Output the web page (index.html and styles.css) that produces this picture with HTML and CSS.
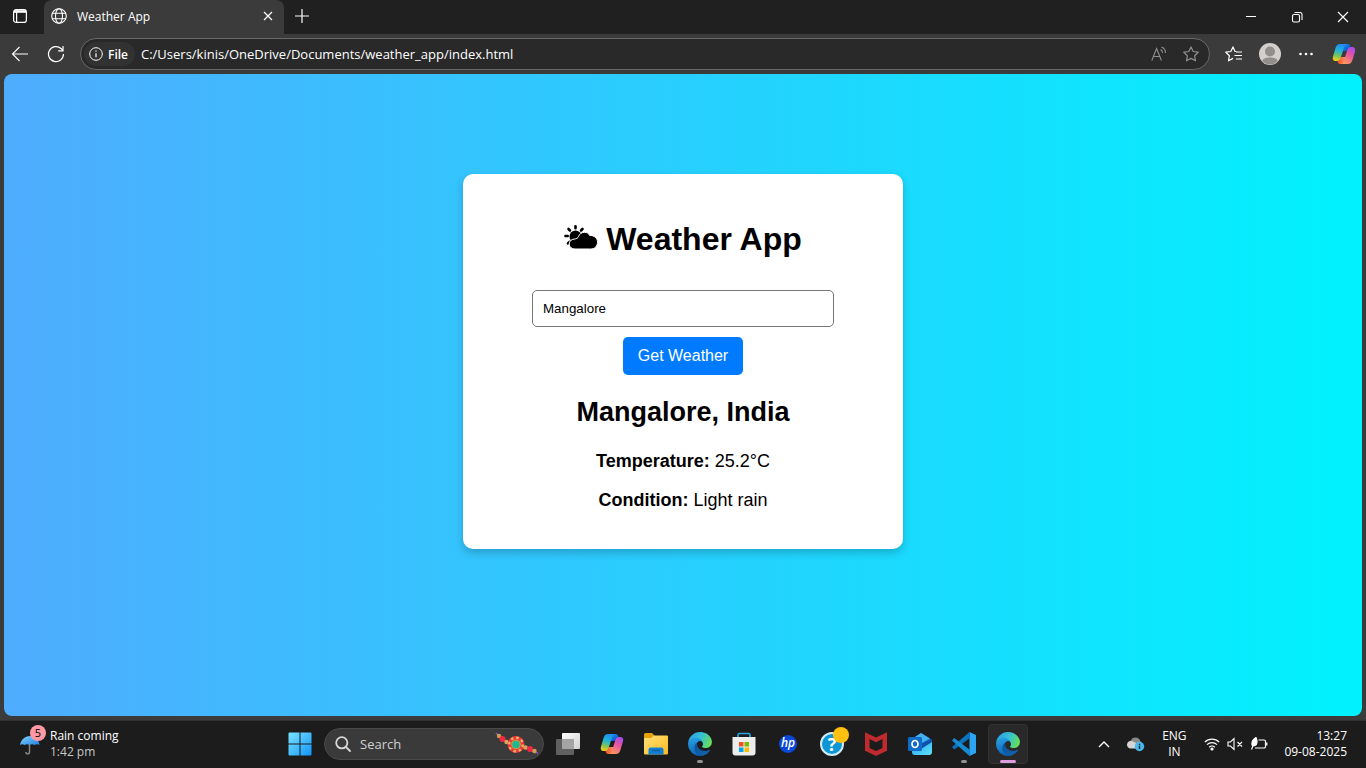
FILE: index.html
```html
<!DOCTYPE html>
<html lang="en">
<head>
<meta charset="utf-8">
<title>Weather App</title>
<link rel="stylesheet" href="styles.css">
</head>
<body>
<svg class="defs" aria-hidden="true">
  <defs>
    <linearGradient id="cpA" x1=".5" y1="0" x2=".3" y2="1"><stop offset="0" stop-color="#1f8cf2"/><stop offset=".4" stop-color="#21b6d6"/><stop offset=".7" stop-color="#7cc35a"/><stop offset="1" stop-color="#f5d312"/></linearGradient>
    <linearGradient id="cpB" x1=".8" y1="0" x2=".3" y2="1"><stop offset="0" stop-color="#a04cf0"/><stop offset=".45" stop-color="#e8559f"/><stop offset="1" stop-color="#ff9a5c"/></linearGradient>
    <linearGradient id="cpC" x1="0" y1="0" x2="1" y2="1"><stop offset="0" stop-color="#1d9bf0"/><stop offset="1" stop-color="#0a3fc4"/></linearGradient>
    <linearGradient id="cpD" x1="0" y1="0" x2="1" y2="0"><stop offset="0" stop-color="#f4452f"/><stop offset="1" stop-color="#ff9a5c"/></linearGradient>
    <linearGradient id="edA" x1="0" y1=".3" x2="1" y2=".6"><stop offset="0" stop-color="#2a9fe0"/><stop offset=".5" stop-color="#35c1d6"/><stop offset="1" stop-color="#68e04f"/></linearGradient>
    <linearGradient id="edB" x1=".3" y1="0" x2=".5" y2="1"><stop offset="0" stop-color="#2aa4e6"/><stop offset="1" stop-color="#0b5fb4"/></linearGradient>
    <linearGradient id="edC" x1="0" y1="0" x2="1" y2="1"><stop offset="0" stop-color="#0d4f94"/><stop offset="1" stop-color="#1166b0"/></linearGradient>
    <linearGradient id="winG" x1="0" y1="0" x2="24" y2="24" gradientUnits="userSpaceOnUse"><stop offset="0" stop-color="#7de6ff"/><stop offset="1" stop-color="#0f93fa"/></linearGradient>
    <linearGradient id="foG" x1="0" y1="0" x2="1" y2="1"><stop offset="0" stop-color="#ffe07a"/><stop offset="1" stop-color="#fcbb1c"/></linearGradient>
    <linearGradient id="umG" x1="0" y1="0" x2="1" y2="1"><stop offset="0" stop-color="#82d4ff"/><stop offset="1" stop-color="#2282e0"/></linearGradient>
    <linearGradient id="whG" x1="0" y1="0" x2="1" y2="1"><stop offset="0" stop-color="#ffffff"/><stop offset="1" stop-color="#cfcfcf"/></linearGradient>
    <linearGradient id="olG" x1="0" y1="0" x2="1" y2="1"><stop offset="0" stop-color="#1e9df0"/><stop offset="1" stop-color="#62e4fb"/></linearGradient>
    <symbol id="copilot" viewBox="0 0 24 24">
      <path d="M10 2h5c2 0 2.900.9 3.300 2.300L19 6.200c-2 0-3 .9-3.700 2.800H11z" fill="url(#cpC)"/>
      <path d="M14 22H9c-2 0-2.900-.9-3.300-2.300L5 17.800c2 0 3-.9 3.700-2.800H13z" fill="url(#cpD)"/>
      <path d="M8 2h7c-1.500 0-2.300 1-2.800 2.700L8.800 15.500C8.200 17.500 7 19 5 19H4C1 19 .3 17 1 14.500l2.700-9C4.500 3 6 2 8 2z" fill="url(#cpA)"/>
      <path d="M16 22H9c1.500 0 2.300-1 2.800-2.700L15.200 8.500C15.800 6.500 17 5 19 5h1c3 0 3.700 2 3 4.500l-2.700 9C19.500 21 18 22 16 22z" fill="url(#cpB)"/>
    </symbol>
    <symbol id="edge" viewBox="4 4 257 257">
      <path d="M235.680 195.460a93.730 93.730 0 0 1-10.540 4.710 101.870 101.870 0 0 1-35.900 6.460c-47.320 0-88.540-32.550-88.540-74.320A31.480 31.480 0 0 1 117.130 105c-42.800 1.800-53.800 46.400-53.800 72.530 0 73.880 68.090 81.370 82.760 81.370 7.910 0 19.840-2.300 27-4.560l1.310-.44a128.340 128.340 0 0 0 66.600-52.800 4 4 0 0 0-5.320-5.640z" fill="url(#edC)"/>
      <path d="M110.340 246.340A79.200 79.200 0 0 1 87.600 225a80.720 80.720 0 0 1 29.530-120c3.120-1.470 8.450-4.130 15.540-4a32.350 32.350 0 0 1 25.690 13 31.880 31.880 0 0 1 6.360 18.660c0-.21 24.460-79.600-80-79.600-43.900 0-80 41.660-80 78.210a130.150 130.150 0 0 0 12.110 56 128 128 0 0 0 156.380 67.110 75.550 75.550 0 0 1-62.780-8z" fill="url(#edB)"/>
      <path d="M156.940 153.780c-.81 1.050-3.300 2.500-3.300 5.660 0 2.610 1.700 5.120 4.720 7.230 14.380 10 41.490 8.680 41.560 8.680a59.560 59.560 0 0 0 30.270-8.350 61.380 61.380 0 0 0 30.430-52.880c.26-22.410-8-37.310-11.340-43.910C228.090 28.760 182.350 5 132.610 5a128 128 0 0 0-128 126.200c.48-36.540 36.800-66.050 80-66.050 3.500 0 23.460.34 42 10.070 16.340 8.580 24.900 18.940 30.850 29.210 6.180 10.670 7.280 24.150 7.280 29.520s-2.740 13.330-7.800 19.830z" fill="url(#edA)"/>
    </symbol>
  </defs>
</svg>

<div class="screen">
  <header class="tabstrip">
    <button class="icon-btn workspaces" aria-label="Tab actions">
      <svg width="16" height="16" viewBox="0 0 16 16" fill="none" stroke="#fff" stroke-width="1.200"><rect x="1.600" y="1.600" width="12.800" height="12.800" rx="2.500"/><path d="M2 3.500h12" stroke-width="2.600"/><path d="M4.600 4v10"/></svg>
    </button>
    <div class="tab">
      <svg width="16" height="16" viewBox="0 0 16 16" fill="none" stroke="#fff" stroke-width="1.100"><circle cx="8" cy="8" r="7.300"/><ellipse cx="8" cy="8" rx="3.500" ry="7.300"/><path d="M1.300 5.300h13.400M1.300 10.700h13.400"/></svg>
      <span class="tab-title">Weather App</span>
      <button class="icon-btn tab-close" aria-label="Close tab"><svg width="10" height="10" viewBox="0 0 10 10" stroke="#fff" stroke-width="1.200"><path d="M1 1l8 8M9 1L1 9"/></svg></button>
    </div>
    <button class="icon-btn new-tab" aria-label="New tab"><svg width="14" height="14" viewBox="0 0 14 14" stroke="#fff" stroke-width="1.200"><path d="M7 0v14M0 7h14"/></svg></button>
    <div class="window-controls">
      <button class="icon-btn" aria-label="Minimize"><svg width="12" height="12" viewBox="0 0 12 12" stroke="#fff"><path d="M1 5.500h10"/></svg></button>
      <button class="icon-btn" aria-label="Restore"><svg width="12" height="12" viewBox="0 0 12 12" fill="none" stroke="#fff" stroke-width="1.100"><rect x="1.500" y="3.500" width="7" height="7.500" rx="1.500"/><path d="M3.500 1.500H9a2 2 0 0 1 2 2V9"/></svg></button>
      <button class="icon-btn" aria-label="Close"><svg width="12" height="12" viewBox="0 0 12 12" stroke="#fff" stroke-width="1.200"><path d="M1 1l10 10M11 1L1 11"/></svg></button>
    </div>
  </header>

  <nav class="toolbar" aria-label="Browser toolbar">
    <button class="icon-btn" aria-label="Back"><svg width="18" height="16" viewBox="0 0 18 16" fill="none" stroke="#fff" stroke-width="1.100"><path d="M17 8H1.500M8.500 1L1.500 8l7 7"/></svg></button>
    <button class="icon-btn" aria-label="Refresh"><svg width="18" height="18" viewBox="0 0 18 18" fill="none" stroke="#fff" stroke-width="1.200"><path d="M16.500 9A7.500 7.500 0 1 1 14 3.500L16 5.500M16 1v4.800h-4.800"/></svg></button>
    <div class="address">
      <button class="site-info"><svg width="14" height="14" viewBox="0 0 14 14" fill="none" stroke="#fff"><circle cx="7" cy="7" r="6.300"/><path d="M7 6.200v4M7 3.600v1.200" stroke-width="1.200"/></svg>File</button>
      <input class="url" type="text" aria-label="Address" value="C:/Users/kinis/OneDrive/Documents/weather_app/index.html">
      <button class="icon-btn" aria-label="Read aloud"><svg width="16" height="16" viewBox="0 0 16 16" fill="none" stroke="#8f8f8f" stroke-width="1.100"><path d="M.8 14.500L5.600 2.500l4.800 12M2.500 10.500h6.200M9.500 3.500c1.300.7 2 1.900 2 3.500M10.500 1c2.500 1 4 3.300 4 6"/></svg></button>
      <button class="icon-btn" aria-label="Add to favorites"><svg width="16" height="16" viewBox="0 0 16 16" fill="none" stroke="#8f8f8f" stroke-width="1.200" stroke-linejoin="round"><path d="M8 .9l2.200 4.600 5 .7-3.600 3.500.9 5.100L8 12.400l-4.500 2.400.9-5.100L.8 6.200l5-.7z"/></svg></button>
    </div>
    <div class="tools">
      <button class="icon-btn" aria-label="Favorites"><svg width="18" height="16" viewBox="0 0 18 16" fill="none" stroke="#fff" stroke-width="1.200" stroke-linejoin="round"><path d="M11.500 5.500H10L8 .9 5.800 5.500l-5 .7 3.600 3.500-.9 5.100L8 12.400M11 6h6M9.500 9.500H17M11 13h6"/></svg></button>
      <button class="icon-btn" aria-label="Profile"><svg width="22" height="22" viewBox="0 0 22 22"><circle cx="11" cy="11" r="11" fill="#d2cfcc"/><circle cx="11" cy="8.500" r="5" fill="#928e8b"/><path d="M3.500 18.500c0-3 3-4 7.500-4s7.500 1 7.500 4a11 11 0 0 1-15 0z" fill="#928e8b"/></svg></button>
      <button class="icon-btn" aria-label="Settings and more"><svg width="14" height="4" viewBox="0 0 14 4" fill="#fff"><circle cx="1.500" cy="2" r="1.300"/><circle cx="7" cy="2" r="1.300"/><circle cx="12.500" cy="2" r="1.300"/></svg></button>
      <button class="icon-btn copilot" aria-label="Copilot"><svg width="24" height="24"><use href="#copilot"/></svg></button>
    </div>
  </nav>

  <main class="page">
    <section class="card">
      <h1><svg width="34" height="26" viewBox="0 0 34 26" aria-hidden="true">
        <g stroke="#000" stroke-width="2.600" stroke-linecap="round"><path d="M11.500 1.300v2M4.500 4l1.500 1.500M1.500 11h2.200M4 18.300l1.500-1.300M18.500 4L17 5.500"/></g>
        <circle cx="11.500" cy="11.500" r="6"/>
        <path d="M11 24c-3.500 0-5.800-2.200-5.800-5 0-2.700 2.100-4.700 4.900-4.900 2.600-.3 3.600-.8 4.400-2.600 1-2.500 3-4.200 6-4.200 2.500 0 4.200 1.200 5.200 3.200 4.400-.2 7.800 2.600 7.800 6.700 0 4-2.800 6.800-7 6.800z" stroke="#fff" stroke-width="1"/>
      </svg> Weather App</h1>
      <input class="city" type="text" aria-label="City" value="Mangalore">
      <button class="submit">Get Weather</button>
      <div class="result">
        <h2>Mangalore, India</h2>
        <p><strong>Temperature:</strong> 25.2°C</p>
        <p><strong>Condition:</strong> Light rain</p>
      </div>
    </section>
  </main>

  <footer class="taskbar">
    <button class="widgets">
      <span class="umbrella">
        <svg width="20" height="20" viewBox="0 0 20 20" fill="none"><path d="M9.500 9v8a1.800 1.800 0 0 1-3.600 0" stroke="#858585" stroke-width="1.500"/><path d="M0 10C1 4.500 5 1 10 1s9 3.500 9.500 9c-1.500-1-3.500-1-5 0-1.500-1-3.500-1-5 0-1.500-1-3.500-1-5 0C3 9 1.500 9 0 10z" fill="url(#umG)"/></svg>
        <span class="badge">5</span>
      </span>
      <span class="stack"><span>Rain coming</span><span class="dim">1:42 pm</span></span>
    </button>

    <div class="apps">
      <button class="app" aria-label="Start"><svg width="24" height="24" viewBox="0 0 24 24" fill="url(#winG)"><path d="M.5 1.500a1 1 0 0 1 1-1h10v11H.5zM12.500.5h10a1 1 0 0 1 1 1v10h-11zM.5 12.500h11v11h-10a1 1 0 0 1-1-1zM12.500 12.500h11v10a1 1 0 0 1-1 1h-10z"/></svg></button>
      <label class="search">
        <svg width="16" height="16" viewBox="0 0 16 16" fill="none" stroke="#d8d8d8" stroke-width="1.800" stroke-linecap="round"><circle cx="6.800" cy="6.800" r="5.600"/><path d="M11 11l4 4"/></svg>
        <input type="text" placeholder="Search" aria-label="Search">
        <svg width="44" height="24" viewBox="0 0 44 24"><path d="M2 2l10 8M30 15l11 6" stroke="#b37a42" stroke-width="1.500"/><circle cx="4" cy="4" r="2.200" fill="#d69a52"/><circle cx="7.500" cy="7" r="3" fill="#f02a45"/><circle cx="11.500" cy="10" r="2.200" fill="#dba45c"/><circle cx="21" cy="12.500" r="8.500" fill="#e83a3a"/><circle cx="21" cy="12.500" r="6.800" fill="none" stroke="#efb160" stroke-width="2.400" stroke-dasharray="2.500 2.840"/><circle cx="21" cy="12.500" r="4.800" fill="#d49a3c"/><circle cx="21" cy="12.500" r="3.800" fill="#20b88c"/><circle cx="30.500" cy="15.500" r="2.200" fill="#dba45c"/><circle cx="35" cy="17" r="3" fill="#f02a45"/><circle cx="39.500" cy="19" r="2.200" fill="#d69a52"/><path d="M.8 1.200l1.500 1M41 20l2 1.500" stroke="#7656c5" stroke-width="1.600"/></svg>
      </label>
      <button class="app" aria-label="Task view"><svg width="24" height="24" viewBox="0 0 24 24"><rect x="0" y="7" width="18" height="16" rx="1" fill="#606060"/><rect x="6" y="1" width="18" height="16" rx="1" fill="url(#whG)"/><path d="M6 7h12v10H6z" fill="#a4a4a4"/></svg></button>
      <button class="app" aria-label="Copilot"><svg width="24" height="24"><use href="#copilot"/></svg></button>
      <button class="app" aria-label="File Explorer"><svg width="24" height="24" viewBox="0 0 24 24"><path d="M0 2.500A1.500 1.500 0 0 1 1.500 1H8l2.500 2.500L8 7H0z" fill="#e4a20b"/><path d="M0 6h7l3-2.500h13a1 1 0 0 1 1 1v17a1 1 0 0 1-1 1H1a1 1 0 0 1-1-1z" fill="url(#foG)"/><path d="M4.500 22.500V17.500a2 2 0 0 1 2-2h11a2 2 0 0 1 2 2v5z" fill="#127fd1"/><path d="M8 18.500h8" stroke="#0a62ab" stroke-width="1.500"/></svg></button>
      <button class="app running" aria-label="Microsoft Edge"><svg width="24" height="24"><use href="#edge"/></svg></button>
      <button class="app" aria-label="Microsoft Store"><svg width="24" height="24" viewBox="0 0 24 24"><path d="M6 6V3a1.500 1.500 0 0 1 1.500-1.500h9A1.500 1.500 0 0 1 18 3v3" fill="none" stroke="#28a5e4" stroke-width="1.600"/><path d="M.5 5h23v15.500a3 3 0 0 1-3 3h-17a3 3 0 0 1-3-3z" fill="#ededed"/><path d="M7 10h4.500v4.500H7z" fill="#f25022"/><path d="M12.500 10H17v4.500h-4.500z" fill="#7fba00"/><path d="M7 15.500h4.500V20H7z" fill="#00a4ef"/><path d="M12.500 15.500H17V20h-4.500z" fill="#ffb900"/></svg></button>
      <button class="app" aria-label="HP"><span class="hp">hp</span></button>
      <button class="app" aria-label="Get Help"><span class="help"><span class="help-mark">?</span><span class="dot"></span></span></button>
      <button class="app" aria-label="McAfee"><svg width="24" height="24" viewBox="0 0 24 24"><path d="M1 .3l11 5.200L23 .3v18.500L12 24 1 18.800z" fill="#bd2b2f"/><path d="M5.500 7l6.500 3.200L18.500 7v9L12 19l-6.500-3z" fill="#1c1c1c"/></svg></button>
      <button class="app" aria-label="Outlook"><svg width="24" height="24" viewBox="0 0 24 24"><path d="M4 8l9-7 11 7v5H4z" fill="#1763bb"/><path d="M6 5.500L13 1l9 5.500-9 5z" fill="#43b3f0"/><path d="M4 11l9 4 11-7v12a3 3 0 0 1-3 3H7a3 3 0 0 1-3-3z" fill="url(#olG)"/><path d="M11 13l13-6v3l-11 7z" fill="#0d51a8"/><rect x="0" y="5" width="14" height="14" rx="1.500" fill="#0f6cc9"/><ellipse cx="7" cy="12" rx="3" ry="3.500" fill="none" stroke="#fff" stroke-width="1.700"/></svg></button>
      <button class="app running" aria-label="Visual Studio Code"><svg width="24" height="24" viewBox="0 0 24 24"><path d="M17.500 0L24 3v18l-6.500 3z" fill="#2ba5ef"/><path d="M17.500 0L0 15l2.200 2.500L18 6z" fill="#0a73bd"/><path d="M17.500 24L0 8.500 2.200 6 18 18z" fill="#168bd2"/></svg></button>
      <button class="app active" aria-label="Weather App - Microsoft Edge"><svg width="24" height="24"><use href="#edge"/></svg></button>
    </div>

    <div class="tray">
      <button class="icon-btn" aria-label="Show hidden icons"><svg width="12" height="8" viewBox="0 0 12 8" fill="none" stroke="#fff" stroke-width="1.400"><path d="M1 7l5-5 5 5"/></svg></button>
      <button class="icon-btn" aria-label="OneDrive"><svg width="18" height="16" viewBox="0 0 18 16"><path d="M4 12a3.600 3.600 0 0 1-.5-7C4.500 2.500 6.500 1.500 8.500 1.500c2.500 0 4 1.500 4.800 3.500L15 8v4z" fill="#8a8a8a"/><path d="M4 12.500a3.800 3.800 0 1 1 1.500-7.200L13 9v3.500z" fill="#d4d4d4"/><circle cx="12.500" cy="10.500" r="4.700" fill="#49b8ee"/><path d="M12.500 9.800v3.200M12.500 7.700v1.300" stroke="#102a3a" stroke-width="1.400"/></svg></button>
      <button class="stack lang"><span>ENG</span><span>IN</span></button>
      <button class="status" aria-label="Network, volume and battery">
        <svg width="16" height="14" viewBox="0 0 16 14" fill="none" stroke="#fff" stroke-width="1.200"><path d="M.8 5.200a10 10 0 0 1 14.400 0M3 7.700a7 7 0 0 1 10 0M5.200 10.200a4 4 0 0 1 5.600 0"/><circle cx="8" cy="12" r="1" fill="#fff"/></svg>
        <svg width="16" height="14" viewBox="0 0 16 14" fill="none" stroke="#fff" stroke-width="1.100"><path d="M1 5h2.500L7 1.500v11L3.500 9H1zM10.500 5l4.500 4.500M15 5l-4.500 4.500"/></svg>
        <svg width="18" height="14" viewBox="0 0 18 14" fill="none" stroke="#fff" stroke-width="1.200"><path d="M8.500 3h5.500a1.500 1.500 0 0 1 1.500 1.500v5a1.500 1.500 0 0 1-1.500 1.500H5M16.800 5.500v3"/><path d="M2 8C1.500 4 3.500 2 6 .5 7.500 3.500 7.500 7.500 5 8.500c-1.200.5-2.500.3-3-.5z" fill="#fff"/><path d="M4.500 5L1.500 12.500"/></svg>
      </button>
      <button class="stack clock"><span>13:27</span><span>09-08-2025</span></button>
    </div>
  </footer>
</div>
</body>
</html>
```
FILE: styles.css
```css
* {
  box-sizing: border-box;
}

body {
  margin: 0;
  background: #1c1c1c;
  color: #fff;
  font-family: "Open Sans", "Noto Sans", sans-serif;
  font-size: 12px;
}

button {
  padding: 0;
  border: 0;
  background: none;
  color: inherit;
  font: inherit;
}

svg {
  display: block;
  flex: none;
}

.defs {
  position: absolute;
  width: 0;
  height: 0;
}

.screen {
  display: flex;
  flex-direction: column;
  min-height: 100vh;
  background: #3b3b3b;
}

.icon-btn {
  display: flex;
  align-items: center;
  justify-content: center;
  flex: none;
  height: 32px;
}

/* Tab strip */
.tabstrip {
  display: flex;
  height: 34px;
  background: #202020;
}

.workspaces {
  width: 44px;
  padding-right: 4px;
}

.tab {
  display: flex;
  align-items: center;
  width: 240px;
  padding: 0 6px 2px 7px;
  border-radius: 8px 8px 0 0;
  background: #3b3b3b;
}

.tab-title {
  flex: 1;
  margin-left: 10px;
}

.tab-close {
  width: 20px;
}

.new-tab {
  width: 35px;
}

.window-controls {
  display: flex;
  margin-left: auto;
}

.window-controls .icon-btn {
  width: 46px;
  height: 34px;
}

/* Toolbar */
.toolbar {
  display: flex;
  align-items: center;
  height: 40px;
  padding-left: 2px;
}

.toolbar > .icon-btn {
  width: 36px;
}

.address {
  display: flex;
  align-items: center;
  flex: 1;
  height: 32px;
  margin-left: 6px;
  padding: 0 2px 0 3px;
  border: 1px solid #686868;
  border-radius: 16px;
  background: #292929;
}

.address .icon-btn {
  width: 32px;
}

.site-info {
  display: flex;
  align-items: center;
  gap: 5px;
  height: 24px;
  padding: 0 7px 0 5px;
  border-radius: 12px;
  background: #323232;
  font-weight: 600;
}

.url {
  flex: 1;
  min-width: 0;
  padding: 0 6px;
  border: 0;
  outline: 0;
  background: none;
  color: #fff;
  font: 13px "Open Sans", "Noto Sans", sans-serif;
}

.tools {
  display: flex;
  padding: 0 4px 0 6px;
}

.tools .icon-btn {
  width: 36px;
}

.tools .copilot {
  width: 38px;
  padding-left: 2px;
}

/* Weather page */
.page {
  flex: 1;
  margin: 0 4px 4px;
  padding: 100px 16px 16px;
  border-radius: 8px;
  background: linear-gradient(to right, #4facfe, #00f2fe);
  color: #000;
  font-family: "Liberation Sans", Arial, sans-serif;
}

.card {
  display: flex;
  flex-direction: column;
  align-items: center;
  max-width: 440px;
  margin: 0 auto;
  padding: 20px;
  border-radius: 10px;
  background: #fff;
  box-shadow: 0 4px 8px rgba(0, 0, 0, 0.2);
}

h1 {
  display: flex;
  align-items: center;
  gap: 8px;
  margin: 24px 0 29px;
  font-size: 32px;
  line-height: 43px;
}

h1 svg {
  margin-bottom: 4px;
}

.city {
  width: 302px;
  max-width: 100%;
  height: 37px;
  padding: 10px;
  border: 1px solid #767676;
  border-radius: 5px;
  font-family: inherit;
}

.submit {
  height: 38px;
  margin-top: 10px;
  padding: 0 15px;
  border-radius: 5px;
  background: #007bff;
  color: #fff;
  font-size: 16px;
}

.result {
  font-size: 18px;
  line-height: 21px;
  text-align: center;
}

h2 {
  margin: 22px 0 23px;
  font-size: 27px;
  line-height: 31px;
}

p {
  margin: 18px 0;
}

/* Taskbar */
.taskbar {
  display: grid;
  grid-template-columns: 280px auto 1fr;
  align-items: center;
  height: 48px;
  padding-bottom: 1px;
  border-top: 1px solid #303030;
  background: #1c1c1c;
}

.stack {
  display: flex;
  flex-direction: column;
  line-height: 16px;
}

.dim {
  color: #c8c8c8;
}

.widgets {
  display: flex;
  align-items: center;
  gap: 10px;
  padding-left: 20px;
  text-align: left;
}

.umbrella {
  position: relative;
  padding-top: 2px;
}

.badge {
  position: absolute;
  top: -8px;
  left: 10px;
  width: 16px;
  height: 16px;
  border-radius: 50%;
  background: #ff99a4;
  color: #000;
  font-size: 11px;
  line-height: 16px;
  text-align: center;
}

.apps {
  display: flex;
  align-items: center;
  gap: 4px;
}

.app {
  position: relative;
  display: flex;
  align-items: center;
  justify-content: center;
  width: 40px;
  height: 40px;
  border-radius: 4px;
}

.running::after,
.active::after {
  content: "";
  position: absolute;
  bottom: 1px;
  width: 6px;
  height: 3px;
  border-radius: 2px;
  background: #929292;
}

.active {
  border: 1px solid #333;
  background: #292929;
}

.active::after {
  bottom: 0;
  width: 16px;
  background: #df9be0;
}

.search {
  display: flex;
  align-items: center;
  gap: 9px;
  width: 220px;
  height: 32px;
  padding: 0 4px 0 10px;
  border: 1px solid #4a4a4a;
  border-radius: 16px;
  background: #3a3a3a;
}

.search input {
  flex: 1;
  min-width: 0;
  padding: 0;
  border: 0;
  outline: 0;
  background: none;
  font: 13px "Open Sans", "Noto Sans", sans-serif;
}

.search input::placeholder {
  color: #d0d0d0;
}

.hp {
  width: 18px;
  height: 18px;
  border-radius: 50%;
  background: #0a48d8;
  font: italic 600 12px/16px "Open Sans", sans-serif;
  text-align: center;
}

.help {
  position: relative;
}

.help-mark {
  display: block;
  width: 24px;
  height: 24px;
  border: 2px solid #d4ecf8;
  border-radius: 50%;
  background: #0d96d6;
  font-size: 18px;
  font-weight: 700;
  line-height: 20px;
}

.dot {
  position: absolute;
  top: -5px;
  right: -5px;
  width: 16px;
  height: 16px;
  border-radius: 50%;
  background: #ffc010;
}

.tray {
  display: flex;
  align-items: center;
  justify-content: flex-end;
  padding-right: 19px;
}

.tray .icon-btn {
  width: 32px;
}

.lang {
  width: 44px;
  text-align: center;
}

.status {
  display: flex;
  align-items: center;
  gap: 7px;
  padding: 0 16px 0 8px;
}

.clock {
  text-align: right;
}
```
